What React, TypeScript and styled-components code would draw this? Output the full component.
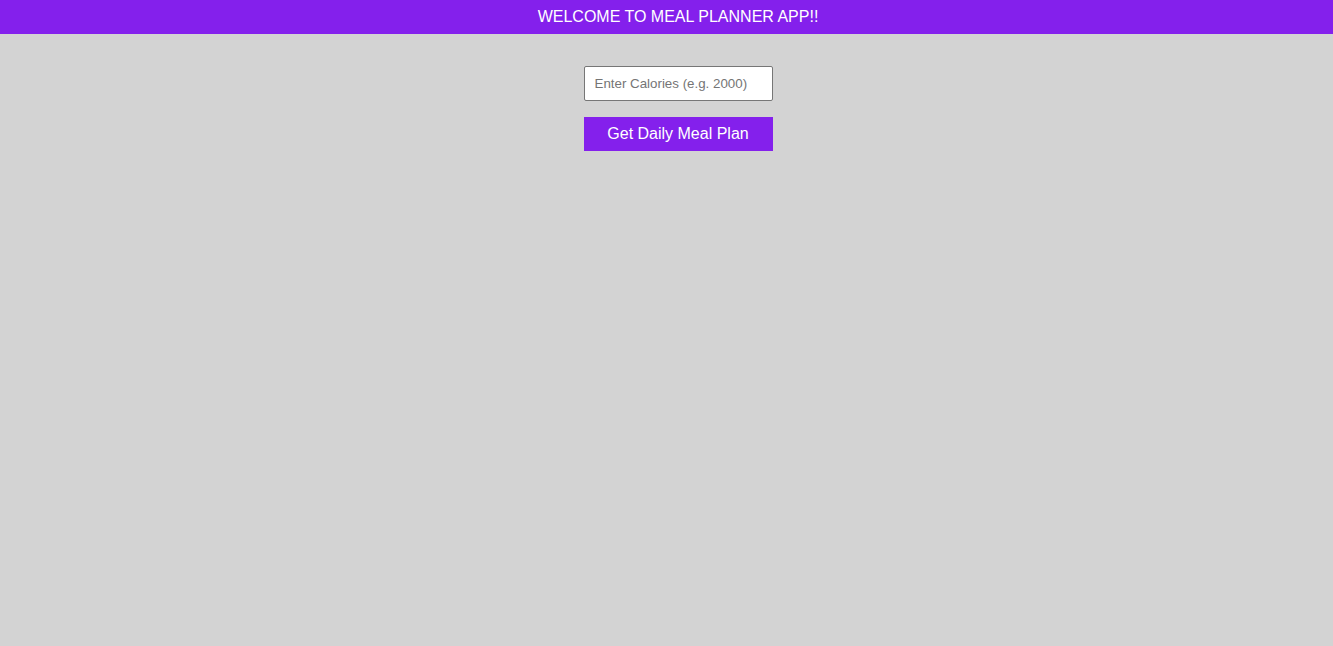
import React from "react";
import styled, { createGlobalStyle } from "styled-components";

const Global = createGlobalStyle`
  html, body { margin: 0; padding: 0; background: #d3d3d3; }
  body { font-family: "Liberation Sans", Arial, sans-serif; }
`;

const Page = styled.div`
  min-height: 646px;
  background: #d3d3d3;
`;

const Header = styled.header`
  height: 34px;
  padding-left: 23px;
  background: #8420ec;
  color: #ffffff;
  font-size: 16px;
  display: flex;
  align-items: center;
  justify-content: center;
`;

const Form = styled.div`
  display: flex;
  flex-direction: column;
  align-items: center;
  padding-top: 32px;
  padding-left: 23px;
  gap: 16px;
`;

const Input = styled.input`
  box-sizing: border-box;
  width: 189px;
  height: 35px;
  padding: 0 10px;
  border: 1px solid #767676;
  border-radius: 2px;
  background: #ffffff;
  font-family: "Liberation Sans", Arial, sans-serif;
  font-size: 13.33px;
  outline: none;
  &::placeholder { color: #757575; }
`;

const Button = styled.button`
  box-sizing: border-box;
  width: 189px;
  height: 34px;
  border: none;
  background: #8420ec;
  color: #ffffff;
  font-family: "Liberation Sans", Arial, sans-serif;
  font-size: 16px;
  cursor: pointer;
`;

export default function App() {
  return (
    <Page>
      <Global />
      <Header>WELCOME TO MEAL PLANNER APP!!</Header>
      <Form>
        <Input type="number" placeholder="Enter Calories (e.g. 2000)" />
        <Button>Get Daily Meal Plan</Button>
      </Form>
    </Page>
  );
}
